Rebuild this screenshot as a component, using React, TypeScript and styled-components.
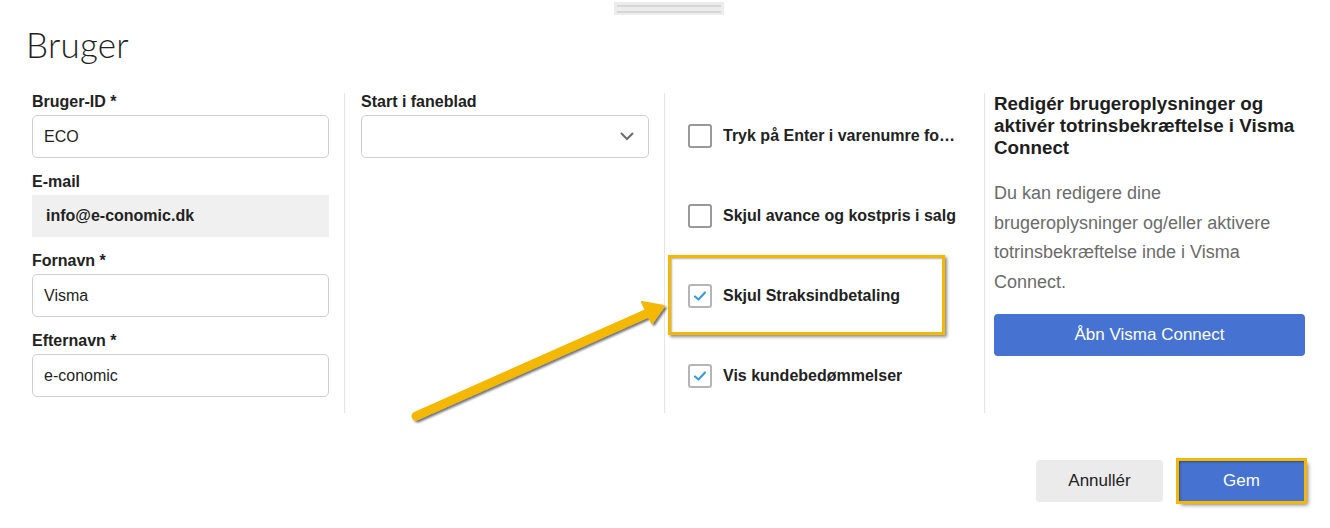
import React from 'react'
import styled, { createGlobalStyle } from 'styled-components'

const GlobalStyle = createGlobalStyle`
  body {
    margin: 0;
    background: #fff;
    font-family: 'Liberation Sans', Arial, sans-serif;
    color: #222;
  }
`

const Dialog = styled.div`
  position: relative;
  width: 1330px;
  height: 528px;
  box-sizing: border-box;
  padding: 0 25px 0 32px;
  overflow: hidden;
`

const Handle = styled.div`
  width: 110px;
  height: 13px;
  margin: 2px auto 0;
  background: #ececec;
  display: flex;
  flex-direction: column;
  justify-content: center;
  gap: 4px;
  padding: 0 3px;
  box-sizing: border-box;

  &::before,
  &::after {
    content: '';
    height: 2px;
    background: #d7d7d7;
  }
`

const Title = styled.h1`
  margin: 7px 0 0 -6px;
  font-family: Lato, 'Open Sans', sans-serif;
  font-weight: 300;
  font-size: 35px;
  line-height: 44px;
  color: #1f1f1f;
  letter-spacing: 0.2px;
`

const Columns = styled.div`
  display: flex;
  margin-top: 27px;
`

const Column = styled.div<{ $w: number; $pl: number; $pr?: number; $pt?: number; $pb?: number; $last?: boolean }>`
  width: ${(p) => p.$w}px;
  box-sizing: border-box;
  padding-left: ${(p) => p.$pl}px;
  padding-right: ${(p) => p.$pr ?? 15}px;
  padding-top: ${(p) => p.$pt ?? 0}px;
  padding-bottom: ${(p) => p.$pb ?? 16}px;
  border-right: ${(p) => (p.$last ? 'none' : '1px solid #e6e6e6')};
`

const Field = styled.div`
  & + & {
    margin-top: 15px;
  }
`

const Label = styled.div`
  font-size: 16px;
  line-height: 18px;
  font-weight: bold;
  color: #222;
  margin-bottom: 4px;
`

const Input = styled.div`
  height: 43px;
  box-sizing: border-box;
  border: 1px solid #cfcfcf;
  border-radius: 5px;
  padding: 0 11px;
  display: flex;
  align-items: center;
  font-size: 16px;
  color: #1e1e1e;
`

const ReadOnly = styled.div`
  height: 42px;
  margin-bottom: 1px;
  background: #f0f0f0;
  padding: 0 14px;
  display: flex;
  align-items: center;
  font-size: 16px;
  font-weight: bold;
  color: #222;
`

const Select = styled(Input)`
  justify-content: flex-end;
  padding-right: 14px;
  color: #666;
`

const CheckRow = styled.div<{ $marked?: boolean }>`
  position: relative;
  height: 80px;
  display: flex;
  align-items: center;
  gap: 11px;

  &:last-child {
    margin-bottom: -3px;
  }

  ${(p) =>
    p.$marked &&
    `
    &::after {
      content: '';
      position: absolute;
      left: -20px;
      right: 13px;
      top: -1px;
      bottom: 1px;
      border: 3px solid #f5b800;
      box-shadow: 2px 2px 3px rgba(0, 0, 0, 0.45), inset 1px 1px 2px rgba(0, 0, 0, 0.3);
    }
  `}
`

const Box = styled.div<{ $checked?: boolean }>`
  flex: none;
  width: 24px;
  height: 24px;
  box-sizing: border-box;
  border: 2px solid ${(p) => (p.$checked ? '#b5b5b5' : '#999')};
  border-radius: 3px;
  display: flex;
  align-items: center;
  justify-content: center;
`

const CheckText = styled.span`
  font-size: 16px;
  font-weight: bold;
  color: #222;
  white-space: nowrap;
  overflow: hidden;
  text-overflow: ellipsis;
`

const Heading = styled.h3`
  margin: 0;
  font-size: 18.8px;
  line-height: 22px;
  font-weight: bold;
  color: #1e1e1e;
`

const Paragraph = styled.p`
  margin: 20px 0 17px;
  font-size: 18px;
  line-height: 29.5px;
  color: #6b6b6b;
`

const Button = styled.button<{ $primary?: boolean; $marked?: boolean }>`
  height: 42px;
  border: none;
  border-radius: 4px;
  font-family: 'Liberation Sans', Arial, sans-serif;
  font-size: 17px;
  cursor: pointer;
  background: ${(p) => (p.$primary ? '#4672d1' : '#ebebeb')};
  color: ${(p) => (p.$primary ? '#fff' : '#222')};
  ${(p) =>
    p.$marked &&
    `
    border-radius: 0;
    outline: 3px solid #f5b800;
    outline-offset: -1px;
    box-shadow: 3px 3px 4px rgba(0, 0, 0, 0.5), inset 2px 2px 2px rgba(0, 0, 0, 0.35);
  `}
`

const WideButton = styled(Button)`
  width: 100%;
`

const Footer = styled.div`
  display: flex;
  justify-content: flex-end;
  gap: 15px;
  margin-top: 47px;

  ${Button} {
    width: 127px;
  }
`

const ArrowLayer = styled.svg`
  position: absolute;
  left: 0;
  top: 0;
  pointer-events: none;
`

const Check = () => (
  <svg width="14" height="12" viewBox="0 0 14 12">
    <path d="M2 6.5 L5.5 9.5 L12 2.5" fill="none" stroke="#3d9be3" strokeWidth="2.2" strokeLinecap="round" strokeLinejoin="round" />
  </svg>
)

const Chevron = () => (
  <svg width="14" height="9" viewBox="0 0 14 9">
    <path d="M1.5 1.5 L7 7 L12.5 1.5" fill="none" stroke="#6b6b6b" strokeWidth="2" strokeLinecap="round" />
  </svg>
)

const options = [
  { text: 'Tryk på Enter i varenumre for at tilføje varelinje', checked: false },
  { text: 'Skjul avance og kostpris i salg', checked: false },
  { text: 'Skjul Straksindbetaling', checked: true, marked: true },
  { text: 'Vis kundebedømmelser', checked: true },
]

export default function App() {
  return (
    <Dialog>
      <GlobalStyle />
      <Handle />
      <Title>Bruger</Title>

      <Columns>
        <Column $w={313} $pl={0}>
          <Field>
            <Label>Bruger-ID *</Label>
            <Input>ECO</Input>
          </Field>
          <Field>
            <Label>E-mail</Label>
            <ReadOnly>info@e-conomic.dk</ReadOnly>
          </Field>
          <Field>
            <Label>Fornavn *</Label>
            <Input>Visma</Input>
          </Field>
          <Field>
            <Label>Efternavn *</Label>
            <Input>e-conomic</Input>
          </Field>
        </Column>

        <Column $w={320} $pl={16}>
          <Field>
            <Label>Start i faneblad</Label>
            <Select>
              <Chevron />
            </Select>
          </Field>
        </Column>

        <Column $w={320} $pl={23} $pr={26} $pt={3} $pb={0}>
          {options.map((o) => (
            <CheckRow key={o.text} $marked={o.marked}>
              <Box $checked={o.checked}>{o.checked && <Check />}</Box>
              <CheckText>{o.text}</CheckText>
            </CheckRow>
          ))}
        </Column>

        <Column $w={320} $pl={9} $pr={0} $last>
          <Heading>Redigér brugeroplysninger og aktivér totrinsbekræftelse i Visma Connect</Heading>
          <Paragraph>Du kan redigere dine brugeroplysninger og/eller aktivere totrinsbekræftelse inde i Visma Connect.</Paragraph>
          <WideButton $primary>Åbn Visma Connect</WideButton>
        </Column>
      </Columns>

      <Footer>
        <Button>Annullér</Button>
        <Button $primary $marked>
          Gem
        </Button>
      </Footer>

      <ArrowLayer width="1330" height="528" viewBox="0 0 1330 528">
        <defs>
          <filter id="sh" x="-10%" y="-10%" width="130%" height="130%">
            <feDropShadow dx="2" dy="2" stdDeviation="1.3" floodColor="#000" floodOpacity="0.55" />
          </filter>
        </defs>
        <g filter="url(#sh)" fill="#f5b800" stroke="#f5b800">
          <line x1="416" y1="416" x2="650" y2="312" strokeWidth="9" strokeLinecap="round" />
          <path d="M642 302 L664 306 L652 323 Z" strokeWidth="2" strokeLinejoin="round" />
        </g>
      </ArrowLayer>
    </Dialog>
  )
}
